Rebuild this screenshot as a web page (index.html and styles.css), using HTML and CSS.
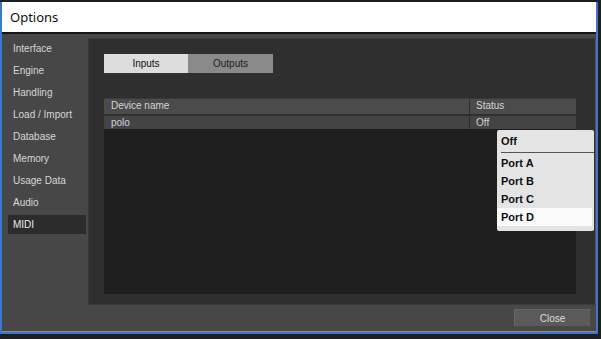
FILE: index.html
```html
<!DOCTYPE html>
<html lang="en">
<head>
  <meta charset="UTF-8">
  <title>Options</title>
  <link rel="stylesheet" href="styles.css">
</head>
<body>
  <div class="window">
    <div class="titlebar">Options</div>
    <div class="main">
      <ul class="sidebar">
        <li>Interface</li>
        <li>Engine</li>
        <li>Handling</li>
        <li>Load / Import</li>
        <li>Database</li>
        <li>Memory</li>
        <li>Usage Data</li>
        <li>Audio</li>
        <li class="selected">MIDI</li>
      </ul>
      <div class="panel">
        <div class="tabs">
          <div class="tab active">Inputs</div>
          <div class="tab">Outputs</div>
        </div>
        <div class="devices">
          <div class="row head">
            <div class="cell name">Device name</div>
            <div class="cell status">Status</div>
          </div>
          <div class="row item">
            <div class="cell name">polo</div>
            <div class="cell status">Off</div>
          </div>
          <div class="devices-body"></div>
        </div>
        <div class="dropdown">
          <div class="opt first">Off</div>
          <div class="opt">Port A</div>
          <div class="opt">Port B</div>
          <div class="opt">Port C</div>
          <div class="opt hover">Port D</div>
        </div>
      </div>
    </div>
    <div class="footer">
      <div class="button">Close</div>
    </div>
  </div>
</body>
</html>
```

FILE: styles.css
```css
body {
  margin: 0;
  background-color: #1b1e23;
  font-family: 'Liberation Sans', Arial, sans-serif;
  font-size: 10px;
  height: 339px;
  overflow: hidden;
}
.window {
  margin-top: 2px;
  width: 594px;
  height: 330px;
  border-left: 2px solid #3d78c2;
  border-right: 2px solid #3d78c2;
  border-bottom: 2px solid #3d78c2;
  background-color: #474747;
  display: flex;
  flex-direction: column;
}
.titlebar {
  height: 30px;
  background-color: #ffffff;
  color: #111;
  font-family: 'Noto Sans', sans-serif;
  font-size: 13px;
  line-height: 30px;
  padding-left: 8px;
  border-bottom: 2px solid #151515;
  flex-shrink: 0;
}
.main {
  display: flex;
  padding-top: 4px;
  height: 267px;
}
.sidebar {
  list-style: none;
  margin: 0;
  padding: 1px 0 0 0;
  width: 86px;
  flex-shrink: 0;
}
.sidebar li {
  height: 22px;
  line-height: 20px;
  padding-left: 11px;
  color: #d6d6d6;
}
.sidebar li.selected {
  margin-left: 6px;
  width: 78px;
  height: 19px;
  line-height: 19px;
  padding-left: 5px;
  box-sizing: border-box;
  background-color: #2c2c2c;
  color: #e8e8e8;
}
.panel {
  position: relative;
  flex-grow: 1;
  background-color: #2f2f2f;
  border: 1px solid #3b3b3b;
  border-right-color: #555;
  padding: 15px 0 0 15px;
}
.tabs {
  display: flex;
}
.tab {
  width: 85px;
  height: 19px;
  line-height: 19px;
  text-align: center;
  background-color: #8a8a8a;
  color: #1e1e1e;
}
.tab.active {
  width: 84px;
  background-color: #dddddd;
  color: #111;
}
.devices {
  margin-top: 25px;
  width: 472px;
}
.row {
  display: flex;
  color: #d4d4d4;
}
.row.head {
  height: 15px;
  line-height: 14px;
  background-color: #4b4b4b;
  border-top: 1px solid #3a3a3a;
  margin-bottom: 2px;
}
.row.item {
  height: 13px;
  line-height: 13px;
  background-color: #444444;
}
.cell {
  padding-left: 7px;
  box-sizing: border-box;
}
.cell.name {
  width: 366px;
  border-right: 1px solid #2e2e2e;
}
.cell.status {
  flex-grow: 1;
  padding-left: 6px;
}
.devices-body {
  height: 165px;
  background-color: #1e1e1e;
}
.dropdown {
  position: absolute;
  left: 408px;
  top: 91px;
  width: 97px;
  height: 101px;
  box-sizing: border-box;
  padding: 2px 0 0 0;
  background-color: #e4e4e4;
  border-radius: 2px;
  font-size: 11px;
  font-weight: bold;
  color: #111;
}
.opt {
  height: 18px;
  line-height: 18px;
  padding-left: 4px;
}
.opt.first {
  height: 20px;
  line-height: 18px;
  margin-left: 4px;
  padding-left: 0;
  border-bottom: 1px solid #555;
  margin-bottom: 1px;
}
.opt.hover {
  background-color: #fbfbfb;
  margin-right: 2px;
}
.footer {
  flex-grow: 1;
  display: flex;
  justify-content: flex-end;
  align-items: flex-start;
  padding: 4px 5px 0 0;
  border-bottom: 1px solid #8c8c8c;
}
.button {
  width: 77px;
  height: 18px;
  line-height: 18px;
  text-align: center;
  background-color: #5a5a5a;
  border: 1px solid #666;
  border-right-color: #4a4a4a;
  border-bottom-color: #4a4a4a;
  box-sizing: border-box;
  color: #dcdcdc;
}
```
